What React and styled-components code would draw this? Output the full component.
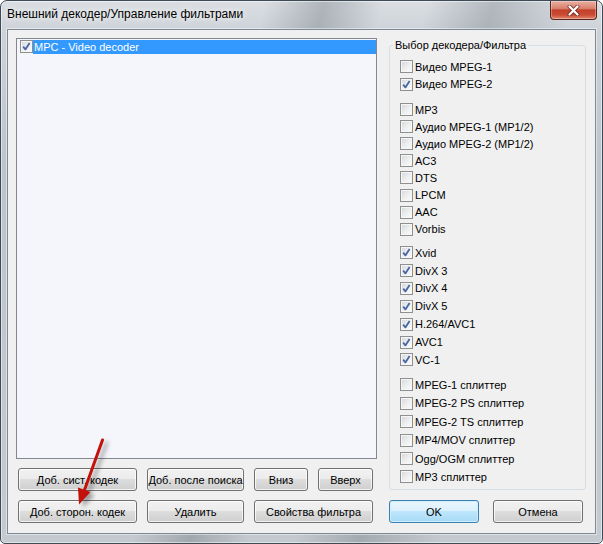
import React from "react";
import styled, { createGlobalStyle } from "styled-components";

const filterGroups = [
  {
    row: 17.5,
    gap: 0,
    items: [
      ["Видео MPEG-1", false],
      ["Видео MPEG-2", true],
    ],
  },
  {
    row: 17.07,
    gap: 8.2,
    items: [
      ["MP3", false],
      ["Аудио MPEG-1 (MP1/2)", false],
      ["Аудио MPEG-2 (MP1/2)", false],
      ["AC3", false],
      ["DTS", false],
      ["LPCM", false],
      ["AAC", false],
      ["Vorbis", false],
    ],
  },
  {
    row: 17.9,
    gap: 6,
    items: [
      ["Xvid", true],
      ["DivX 3", true],
      ["DivX 4", true],
      ["DivX 5", true],
      ["H.264/AVC1", true],
      ["AVC1", true],
      ["VC-1", true],
    ],
  },
  {
    row: 18.4,
    gap: 6.85,
    items: [
      ["MPEG-1 сплиттер", false],
      ["MPEG-2 PS сплиттер", false],
      ["MPEG-2 TS сплиттер", false],
      ["MP4/MOV сплиттер", false],
      ["Ogg/OGM сплиттер", false],
      ["MP3 сплиттер", false],
    ],
  },
];

const CheckBox = ({ checked }) => (
  <Box>
    {checked && (
      <svg width="13" height="13" viewBox="0 0 13 13">
        <polyline
          points="3.2,6.6 5.4,9.4 9.6,3"
          fill="none"
          stroke="#4866a6"
          strokeWidth="1.8"
          strokeLinejoin="round"
        />
      </svg>
    )}
  </Box>
);

const App = () => {
  return (
    <>
      <GlobalStyle />
      <Window>
        <TitleBar>
          <Title>Внешний декодер/Управление фильтрами</Title>
          <CloseButton>
            <svg width="13" height="11" viewBox="0 0 13 11">
              <path d="M2.5 1.5 L10.5 9.5 M10.5 1.5 L2.5 9.5" stroke="#4a1710" strokeWidth="4" strokeLinecap="round" opacity="0.6" />
              <path d="M2.5 1.5 L10.5 9.5 M10.5 1.5 L2.5 9.5" stroke="#fff" strokeWidth="2.2" strokeLinecap="round" />
            </svg>
          </CloseButton>
        </TitleBar>
        <Client>
          <LeftPane>
            <ListBox>
              <ListItem>
                <CheckBox checked />
                <ItemLabel>MPC - Video decoder</ItemLabel>
              </ListItem>
            </ListBox>
            <ButtonGrid>
              <Button>Доб. сист. кодек</Button>
              <Button>Доб. после поиска</Button>
              <Button>Вниз</Button>
              <Button>Вверх</Button>
              <Button>Доб. сторон. кодек</Button>
              <Button>Удалить</Button>
              <Button $span={2}>Свойства фильтра</Button>
            </ButtonGrid>
          </LeftPane>
          <RightPane>
            <GroupBox>
              <Legend>Выбор декодера/Фильтра</Legend>
              {filterGroups.map((g, i) => (
                <Group key={i} $gap={g.gap}>
                  {g.items.map(([label, checked]) => (
                    <Row key={label} $h={g.row}>
                      <CheckBox checked={checked} />
                      <span>{label}</span>
                    </Row>
                  ))}
                </Group>
              ))}
            </GroupBox>
            <DialogButtons>
              <Button $default>OK</Button>
              <Button>Отмена</Button>
            </DialogButtons>
          </RightPane>
        </Client>
        <Arrow width="60" height="90" viewBox="0 0 60 90">
          <line x1="42.5" y1="10" x2="24.5" y2="60" stroke="#c3120c" strokeWidth="3" strokeLinecap="round" />
          <polygon points="19,74.5 30.5,62 18,57.5" fill="#c3120c" />
        </Arrow>
      </Window>
    </>
  );
};

export default App;

const GlobalStyle = createGlobalStyle`
  html, body {
    margin: 0;
    padding: 0;
    background: #fff;
  }
  body {
    font-family: "Liberation Sans", Arial, sans-serif;
    font-size: 11px;
    color: #000;
  }
`;

const Window = styled.div`
  position: relative;
  width: 603px;
  height: 544px;
  box-sizing: border-box;
  border: 1px solid #3e4a56;
  border-radius: 7px 7px 5px 5px;
  box-shadow: inset 0 0 0 1px rgba(255, 255, 255, 0.5);
  background:
    linear-gradient(104deg, transparent 0 36%, rgba(80, 90, 100, 0.3) 44%, transparent 52%, transparent 58%, rgba(80, 90, 100, 0.28) 67%, transparent 78%),
    linear-gradient(180deg, #dadee2 0%, #ccd2d8 6%, #bcc4cc 30%, #c4cacf 100%);
  display: flex;
  flex-direction: column;
  overflow: hidden;
`;

const TitleBar = styled.div`
  display: flex;
  height: 28px;
  flex-shrink: 0;
  padding: 0 5px 0 6px;
`;

const Title = styled.div`
  font-size: 12px;
  line-height: 15px;
  margin-top: 6px;
  text-shadow: 0 0 6px rgba(255, 255, 255, 0.9), 0 0 10px rgba(255, 255, 255, 0.7);
`;

const CloseButton = styled.div`
  margin-left: auto;
  width: 47px;
  height: 19px;
  box-sizing: border-box;
  border: 1px solid #5a271f;
  border-top: none;
  border-radius: 0 0 4px 4px;
  background: linear-gradient(180deg, #eab0a2 0%, #d9806c 42%, #c2402a 50%, #cc4c34 78%, #e08a72 100%);
  box-shadow: inset 0 0 0 1px rgba(255, 255, 255, 0.3);
  display: flex;
  align-items: center;
  justify-content: center;
`;

const Client = styled.div`
  flex: 1;
  margin: 0 6px 9px 6px;
  border: 1px solid #7d8995;
  box-shadow: 0 0 0 1px rgba(255, 255, 255, 0.45);
  background: #f0f0f0;
  display: flex;
  gap: 12px;
  padding: 8px 9px 10px 8px;
`;

const LeftPane = styled.div`
  width: 361px;
  display: flex;
  flex-direction: column;
`;

const ListBox = styled.div`
  flex: 1;
  border: 1px solid #828790;
  background: #f5f6fc;
  padding-top: 1px;
  margin-bottom: 9px;
`;

const ListItem = styled.div`
  display: flex;
  height: 14px;
  padding-left: 3px;
`;

const ItemLabel = styled.div`
  flex: 1;
  background: #3399ff;
  color: #fff;
  line-height: 14px;
  padding-left: 1px;
`;

const Box = styled.span`
  width: 13px;
  height: 13px;
  flex-shrink: 0;
  box-sizing: border-box;
  border: 1px solid #8e8f8f;
  background: linear-gradient(135deg, #d3d6da 0%, #eeeff0 55%, #fbfbfb 100%);
  box-shadow: inset 0 0 0 1px #f6f6f6;
  display: flex;
  align-items: center;
  justify-content: center;
  svg {
    margin: -1px;
  }
`;

const ButtonGrid = styled.div`
  display: grid;
  grid-template-columns: 119px 97px 54px 55px;
  grid-auto-rows: 23px;
  column-gap: 10px;
  row-gap: 9px;
  padding-left: 2px;
`;

const Button = styled.div`
  grid-column: ${(p) => (p.$span ? `span ${p.$span}` : "auto")};
  height: 23px;
  box-sizing: border-box;
  border: 1px solid ${(p) => (p.$default ? "#3c7fb1" : "#707070")};
  border-radius: 3px;
  background: ${(p) =>
    p.$default
      ? "linear-gradient(180deg, #eaf6fd 0%, #d9f0fc 50%, #bee6fd 50%, #a7d9f5 100%)"
      : "linear-gradient(180deg, #f2f2f2 0%, #ebebeb 50%, #dddddd 50%, #cfcfcf 100%)"};
  box-shadow: inset 0 0 0 1px ${(p) => (p.$default ? "#cdeefd" : "rgba(255,255,255,0.75)")};
  display: flex;
  align-items: center;
  justify-content: center;
  white-space: nowrap;
`;

const RightPane = styled.div`
  width: 197px;
  display: flex;
  flex-direction: column;
`;

const GroupBox = styled.fieldset`
  margin: 0;
  height: 452px;
  min-width: 0;
  box-sizing: border-box;
  border: 1px solid #d5dfe5;
  border-radius: 3px;
  padding: 6px 0 0 10px;
`;

const Legend = styled.legend`
  padding: 0 2px;
  margin-left: -7px;
  line-height: 14px;
  font-size: 11px;
`;

const Group = styled.div`
  margin-top: ${(p) => p.$gap}px;
`;

const Row = styled.div`
  display: flex;
  align-items: center;
  gap: 2px;
  height: ${(p) => p.$h}px;
  white-space: nowrap;
`;

const DialogButtons = styled.div`
  display: flex;
  gap: 14px;
  margin-top: 10px;
  & > div {
    width: 90px;
  }
`;

const Arrow = styled.svg`
  position: absolute;
  left: 59px;
  top: 429px;
  filter: drop-shadow(4px 3px 2px rgba(0, 0, 0, 0.35));
`;
